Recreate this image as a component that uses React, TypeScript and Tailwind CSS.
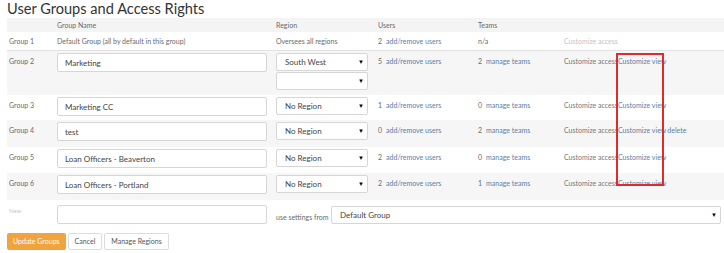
const groups = [
  { id: "Group 2", name: "Marketing", region: "South West", extra: true, users: 5, teams: 2, del: false, bg: "bg-[#f6f6f6]", h: "h-[44px]" },
  { id: "Group 3", name: "Marketing CC", region: "No Region", users: 1, teams: 0, del: false, bg: "bg-white", h: "h-[25px]" },
  { id: "Group 4", name: "test", region: "No Region", users: 0, teams: 2, del: true, bg: "bg-[#f6f6f6]", h: "h-[27px]" },
  { id: "Group 5", name: "Loan Officers - Beaverton", region: "No Region", users: 2, teams: 0, del: false, bg: "bg-white", h: "h-[26px]" },
  { id: "Group 6", name: "Loan Officers - Portland", region: "No Region", users: 2, teams: 1, del: false, bg: "bg-[#f6f6f6]", h: "h-[27px]" },
];

const Arrow = () => <span className="text-[6px] text-black leading-none">▼</span>;

const Select = ({ value, className }: { value: string; className: string }) => (
  <div className={`flex items-center justify-between border border-[#d6d6d6] rounded-[2px] bg-white pl-[8px] pr-[3px] text-[8px] text-[#444] ${className}`}>
    <span>{value}</span>
    <Arrow />
  </div>
);

const TextBox = ({ value }: { value: string }) => (
  <div className="flex items-center w-[210px] h-[19px] border border-[#d6d6d6] rounded-[2px] bg-white pl-[7px] text-[8px] text-[#444]">
    {value}
  </div>
);

export default function App() {
  return (
    <div className="relative w-[724px] h-[253px] bg-white overflow-hidden text-[#6a6a6a] text-[7px]" style={{ fontFamily: "Lato, 'Open Sans', sans-serif" }}>
      <h1 className="pl-[7px] pt-[1px] h-[18px] text-[14.6px] leading-[16px] text-[#333]">User Groups and Access Rights</h1>

      <div className="ml-[7px]">
        <div className="flex h-[14px] items-center bg-[#f4f4f4]">
          <div className="w-[50px]" />
          <div className="w-[219px]">Group Name</div>
          <div className="w-[102px]">Region</div>
          <div className="w-[100px]">Users</div>
          <div className="w-[86px]">Teams</div>
        </div>
        <div className="flex h-[19px] items-center border-b border-[#e2e2e2]">
          <div className="w-[50px] pl-[2px]">Group 1</div>
          <div className="w-[219px]">Default Group (all by default in this group)</div>
          <div className="w-[102px]">Oversees all regions</div>
          <div className="w-[100px]">
            <span className="mr-[4px]">2</span>
            <span className="text-[#5b7ea6]">add/remove users</span>
          </div>
          <div className="w-[86px]">n/a</div>
          <div className="text-[#c4c4c4]">Customize access</div>
        </div>

        {groups.map((g) => (
          <div key={g.id} className={`flex ${g.h} ${g.bg}`}>
            <div className="w-[50px] pl-[2px] pt-[5px]">{g.id}</div>
            <div className="w-[219px] pt-[2px]">
              <TextBox value={g.name} />
            </div>
            <div className="w-[102px] pt-[2px] flex flex-col gap-[1px]">
              <Select value={g.region} className="w-[92px] h-[18px]" />
              {g.extra && <Select value="" className="w-[92px] h-[18px]" />}
            </div>
            <div className="w-[100px] pt-[5px]">
              <span className="mr-[4px]">{g.users}</span>
              <span className="text-[#5b7ea6]">add/remove users</span>
            </div>
            <div className="w-[86px] pt-[5px]">
              <span className="mr-[4px]">{g.teams}</span>
              <span className="text-[#5b7ea6]">manage teams</span>
            </div>
            <div className="pt-[5px] flex">
              <span className="w-[54px] overflow-hidden whitespace-nowrap text-[#777]">Customize access</span>
              <span className="text-[#5b7ea6]">Customize view</span>
              {g.del && <span className="text-[#5b7ea6] ml-[1px]">delete</span>}
            </div>
          </div>
        ))}

        <div className="flex h-[29px] bg-white">
          <div className="w-[50px] pl-[2px] pt-[6px] text-[#c8c8c8] text-[6px]">New</div>
          <div className="w-[219px] pt-[5px]">
            <TextBox value="" />
          </div>
          <div className="w-[55px] pt-[12px]">use settings from</div>
          <div className="pt-[6px]">
            <Select value="Default Group" className="w-[390px] h-[18px]" />
          </div>
        </div>
      </div>

      <div className="flex gap-[2px] pl-[7px] pt-[4px]">
        <button className="h-[17px] px-[6px] rounded-[2px] bg-[#f0a33e] text-white text-[7px]">Update Groups</button>
        <button className="h-[17px] px-[6px] rounded-[2px] border border-[#dcdcdc] bg-white text-[#555] text-[7px]">Cancel</button>
        <button className="h-[17px] px-[6px] rounded-[2px] border border-[#dcdcdc] bg-white text-[#555] text-[7px]">Manage Regions</button>
      </div>

      <div className="absolute left-[616px] top-[53px] w-[48px] h-[133px] border-2 border-[#e02b2b]" />
    </div>
  );
}
